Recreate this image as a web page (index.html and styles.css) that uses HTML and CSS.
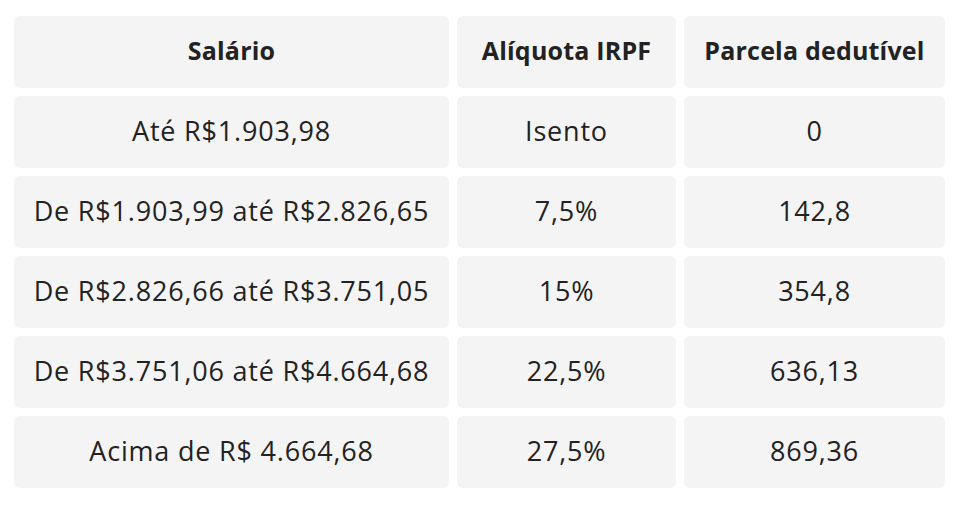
FILE: index.html
```html
<!DOCTYPE html>
<html lang="pt-BR">
<head>
<meta charset="utf-8">
<link rel="stylesheet" href="styles.css">
</head>
<body>
<div class="table">
  <div class="cell head">Salário</div>
  <div class="cell head">Alíquota IRPF</div>
  <div class="cell head">Parcela dedutível</div>

  <div class="cell">Até R$1.903,98</div>
  <div class="cell">Isento</div>
  <div class="cell">0</div>

  <div class="cell">De R$1.903,99 até R$2.826,65</div>
  <div class="cell">7,5%</div>
  <div class="cell">142,8</div>

  <div class="cell">De R$2.826,66 até R$3.751,05</div>
  <div class="cell">15%</div>
  <div class="cell">354,8</div>

  <div class="cell">De R$3.751,06 até R$4.664,68</div>
  <div class="cell">22,5%</div>
  <div class="cell">636,13</div>

  <div class="cell">Acima de R$ 4.664,68</div>
  <div class="cell">27,5%</div>
  <div class="cell">869,36</div>
</div>
</body>
</html>
```
FILE: styles.css
```css
html, body {
  margin: 0;
  padding: 0;
  background: #ffffff;
}
body {
  font-family: "Open Sans", "Noto Sans", sans-serif;
  color: #222222;
}
.table {
  display: grid;
  grid-template-columns: 435px 219px 261px;
  grid-auto-rows: 72px;
  gap: 8px;
  padding: 16px 0 0 14px;
}
.cell {
  background: #f4f4f4;
  border-radius: 6px;
  display: flex;
  align-items: center;
  justify-content: center;
  padding-bottom: 4px;
  font-size: 27px;
  letter-spacing: 0.8px;
  white-space: nowrap;
}
.head {
  font-size: 25px;
  font-weight: 700;
  letter-spacing: 0.2px;
}
```
